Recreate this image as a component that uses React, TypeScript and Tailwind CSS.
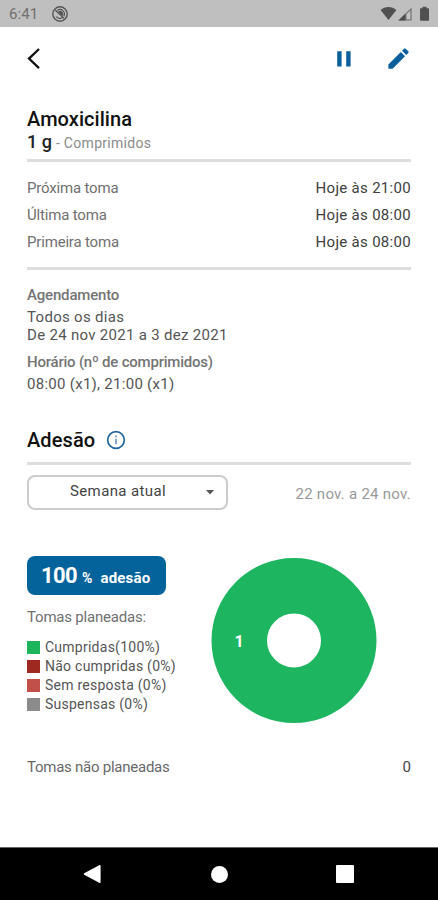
import { MdEdit } from "react-icons/md";

const intakes = [
  { label: "Próxima toma", value: "Hoje às 21:00" },
  { label: "Última toma", value: "Hoje às 08:00" },
  { label: "Primeira toma", value: "Hoje às 08:00" },
];

const legend = [
  { label: "Cumpridas(100%)", color: "bg-[#1db55c]" },
  { label: "Não cumpridas (0%)", color: "bg-[#9d2920]" },
  { label: "Sem resposta (0%)", color: "bg-[#c15049]" },
  { label: "Suspensas (0%)", color: "bg-[#8b8b8b]" },
];

function StatusBar() {
  return (
    <div className="flex h-[27px] shrink-0 items-center justify-between bg-[#bfbfbf] pl-[9px] pr-[8px] text-[#505050]">
      <div className="flex items-center">
        <span className="w-[43px] pt-[2px] text-[15px] leading-[25px] tracking-[0.1px] text-[#707070]">6:41</span>
        <svg width="16" height="16" viewBox="0 0 16 16" fill="none" stroke="#555555">
          <circle cx="8" cy="8" r="7.2" strokeWidth="1.4" />
          <path d="M4.3 10.7A4.5 4.5 0 0 0 10.6 11.6M5.2 4.4A4.5 4.5 0 0 1 11.8 10.2" strokeWidth="1.2" />
          <path d="M3.3 4.3 12 12.2" strokeWidth="1.2" />
          <path d="M6 6A2.8 2.8 0 0 1 10.4 9.9Z" fill="#555555" stroke="none" />
        </svg>
      </div>
      <svg width="50" height="16" viewBox="0 0 50 16" fill="#505050">
        <path d="M0.6 4.1C5-0.2 12-0.2 16.4 4.1L8.5 14Z" />
        <path d="M31.6 1.4V14.6H18.4Z" fill="#777777" />
        <path d="M25.5 7.5V14.6H18.4Z" />
        <path d="M30.3 4.5V13.3H26.5V8.3Z" fill="#c4c4c4" />
        <path d="M42.5 0.8H46.5V2.2H48.3Q49 2.2 49 3V14Q49 14.8 48.2 14.8H40.8Q40 14.8 40 14V3Q40 2.2 40.8 2.2H42.5Z" />
      </svg>
    </div>
  );
}

function Divider() {
  return <div className="h-[3px] shrink-0 bg-[#dddddd]" />;
}

function DonutChart() {
  return (
    <svg width="166" height="166" viewBox="0 0 166 166" className="shrink-0">
      <circle cx="83" cy="82.5" r="54.75" fill="none" stroke="#1db55f" strokeWidth="55.5" />
      <text x="28" y="88.5" textAnchor="middle" fill="#ffffff" className="text-[16px] font-bold">
        1
      </text>
    </svg>
  );
}

function NavBar() {
  return (
    <div className="flex h-[53px] shrink-0 items-center border-t border-[#666666] bg-black pl-[83px]">
      <svg width="18" height="20" viewBox="0 0 18 20" fill="#ffffff" className="mr-[110px]">
        <path d="M17.6 2V18Q17.6 19.6 16.2 18.8L1.2 10.7Q0 10 1.2 9.3L16.2 1.2Q17.6 0.4 17.6 2Z" />
      </svg>
      <div className="size-[17px] rounded-full bg-white" />
      <div className="ml-[108px] size-[18px] rounded-[1px] bg-white" />
    </div>
  );
}

export default function App() {
  return (
    <div className="flex h-[900px] w-[438px] flex-col overflow-hidden bg-white font-[Roboto,sans-serif] text-[#555555]">
      <StatusBar />

      <header className="flex h-[63px] shrink-0 items-center justify-between pl-[27px] pr-[26px]">
        <svg width="14" height="22" viewBox="0 0 14 22" fill="none" stroke="#111111" strokeWidth="2.3">
          <path d="M12 1 2 10.6 12 20.2" />
        </svg>
        <div className="flex items-center gap-[34px] text-[#0b5f9b]">
          <svg width="14" height="16" viewBox="0 0 14 16" fill="currentColor">
            <path d="M0.2 0.3H4.6V15.6H0.2ZM9.2 0.3H13.6V15.6H9.2Z" />
          </svg>
          <MdEdit size={27} />
        </div>
      </header>

      <main className="flex flex-1 flex-col px-[27px]">
        <h1 className="mt-[18px] h-[23px] text-[20px] font-medium leading-[23px] tracking-[0.05px] text-[#111111]">
          Amoxicilina
        </h1>
        <div className="flex h-[28px] items-baseline leading-[22px]">
          <span className="text-[18px] font-medium text-[#222222]">1 g</span>
          <span className="ml-[4px] text-[14px] tracking-[0.3px] text-[#8b8b8b]">- Comprimidos</span>
        </div>
        <Divider />

        <div className="mt-[13px] flex h-[92px] flex-col text-[15px]">
          {intakes.map((intake) => (
            <div key={intake.label} className="flex h-[27px] items-center justify-between">
              <span className="tracking-[-0.18px] text-[#707070]">{intake.label}</span>
              <span className="tracking-[0.3px] text-[#404040]">{intake.value}</span>
            </div>
          ))}
        </div>
        <Divider />

        <section className="mt-[14px] h-[144px] text-[15px] leading-[18px]">
          <h2 className="h-[22px] font-medium leading-[22px] tracking-[-0.18px] text-[#747474]">Agendamento</h2>
          <p className="mt-[2px] tracking-[0.3px]">Todos os dias</p>
          <p className="tracking-[0.3px]">De 24 nov 2021 a 3 dez 2021</p>
          <h2 className="mt-[7px] h-[22px] font-medium leading-[22px] tracking-[-0.22px] text-[#747474]">
            Horário (nº de comprimidos)
          </h2>
          <p className="mt-[2px] tracking-[0.28px]">08:00 (x1), 21:00 (x1)</p>
        </section>

        <div className="flex h-[34px] shrink-0 items-start">
          <h2 className="text-[20px] font-medium leading-[25px] tracking-[0.1px] text-[#111111]">Adesão</h2>
          <svg width="20" height="20" viewBox="0 0 20 20" fill="none" stroke="#24669f" className="ml-[11px] mt-[2px]">
            <circle cx="10" cy="10" r="8.3" strokeWidth="1.7" />
            <path d="M10 8.7V14.2M10 5.5V7.3" stroke="#7ba0c4" strokeWidth="1.8" />
          </svg>
        </div>
        <Divider />

        <div className="mt-[10px] flex h-[36px] shrink-0 items-start justify-between">
          <button className="flex h-[35px] w-[201px] items-center rounded-[8px] border-2 border-[#cccccc] pl-[41px] pr-[12px] text-[15px] text-[#444444]">
            <span className="flex-1 pb-[2px] text-left tracking-[0.38px]">Semana atual</span>
            <svg width="8" height="5" viewBox="0 0 8 5" fill="#555555">
              <path d="M0 0H8L4 4.5Z" />
            </svg>
          </button>
          <span className="mt-[8px] text-[15px] tracking-[0.26px] text-[#999999]">22 nov. a 24 nov.</span>
        </div>

        <div className="mt-[45px] flex h-[193px] shrink-0 items-start justify-between">
          <div>
            <div className="flex h-[39px] w-[139px] items-baseline rounded-[8px] bg-[#05639c] pl-[14px] font-bold leading-[40px] text-white">
              <span className="text-[22px] tracking-[-0.6px]">100</span>
              <span className="ml-[5px] text-[14px]">%</span>
              <span className="ml-[8px] text-[15px] tracking-[0.2px]">adesão</span>
            </div>
            <p className="mt-[12px] h-[20px] text-[15px] leading-[20px] tracking-[-0.2px] text-[#707070]">
              Tomas planeadas:
            </p>
            <ul className="mt-[11px]">
              {legend.map((item) => (
                <li key={item.label} className="flex h-[19px] items-center">
                  <span className={`size-[13px] ${item.color}`} />
                  <span className="ml-[5px] text-[14px] tracking-[0.25px]">{item.label}</span>
                </li>
              ))}
            </ul>
          </div>
          <div className="mr-[34px] mt-[2px]">
            <DonutChart />
          </div>
        </div>

        <div className="mt-[8px] flex h-[20px] items-center justify-between text-[15px]">
          <span className="tracking-[-0.25px] text-[#686868]">Tomas não planeadas</span>
          <span className="text-[#444444]">0</span>
        </div>
      </main>

      <NavBar />
    </div>
  );
}
